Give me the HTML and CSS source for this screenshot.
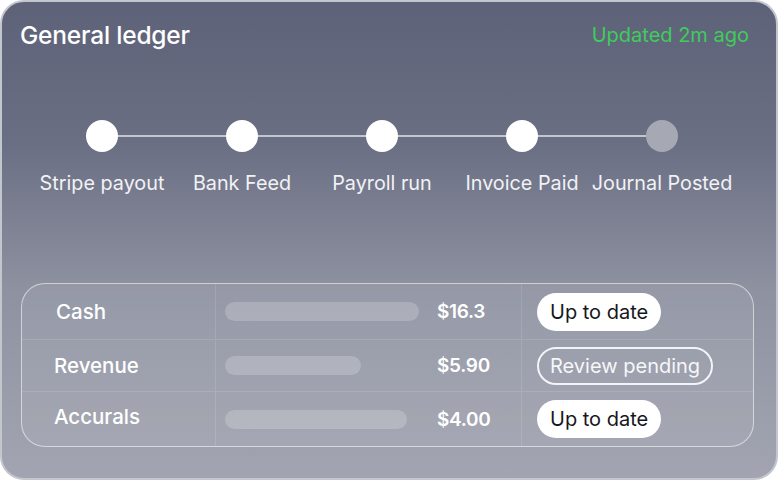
FILE: index.html
```html
<!DOCTYPE html>
<html lang="en">
<head>
<meta charset="utf-8">
<title>General ledger</title>
<link rel="stylesheet" href="styles.css">
</head>
<body>
<div class="card">
  <header class="head">
    <h1 class="title">General ledger</h1>
    <span class="updated">Updated 2m ago</span>
  </header>

  <ol class="steps">
    <li class="step done"><span class="dot"></span><span class="label">Stripe payout</span></li>
    <li class="step done"><span class="dot"></span><span class="label">Bank Feed</span></li>
    <li class="step done"><span class="dot"></span><span class="label">Payroll run</span></li>
    <li class="step done"><span class="dot"></span><span class="label">Invoice Paid</span></li>
    <li class="step pending"><span class="dot"></span><span class="label">Journal Posted</span></li>
  </ol>

  <div class="ledger">
    <div class="cell name row1">Cash</div>
    <div class="cell value row1"><div class="track"><div class="bar" style="width:194px"></div></div><span class="amount">$16.3</span></div>
    <div class="cell status row1"><span class="badge solid">Up to date</span></div>

    <div class="cell name row2">Revenue</div>
    <div class="cell value row2"><div class="track"><div class="bar" style="width:136px"></div></div><span class="amount">$5.90</span></div>
    <div class="cell status row2"><span class="badge outline">Review pending</span></div>

    <div class="cell name row3 last">Accurals</div>
    <div class="cell value row3 last"><div class="track"><div class="bar" style="width:182px"></div></div><span class="amount">$4.00</span></div>
    <div class="cell status row3 last"><span class="badge solid">Up to date</span></div>
  </div>
</div>
</body>
</html>
```

FILE: styles.css
```css
* { box-sizing: border-box; }

html, body {
  margin: 0;
  padding: 0;
  background: #ffffff;
}

body {
  font-family: Inter, "Liberation Sans", sans-serif;
  width: 778px;
  height: 480px;
}

.card {
  width: 778px;
  height: 480px;
  border: 2px solid #c4c6cd;
  border-radius: 24px;
  background: linear-gradient(180deg, #5d6278 0%, #6b6f84 30%, #8e91a0 60%, #a2a5b1 100%);
  padding: 17px 27px 0 18px;
  display: flex;
  flex-direction: column;
}

.head {
  display: flex;
  justify-content: space-between;
  align-items: center;
  height: 32px;
}

.title {
  margin: 0;
  font-size: 24.5px;
  font-weight: 500;
  color: #ffffff;
  letter-spacing: -0.2px;
}

.updated {
  font-size: 20px;
  color: #3fcc5c;
}

.steps {
  list-style: none;
  margin: 69px 0 0 12px;
  padding: 0;
  display: grid;
  grid-template-columns: repeat(5, 140px);
}

.step {
  position: relative;
  display: flex;
  flex-direction: column;
  align-items: center;
}

.step::before {
  content: "";
  position: absolute;
  top: 15px;
  left: 50%;
  width: 100%;
  height: 2px;
  background: #c3c5cf;
}

.step:last-child::before { display: none; }

.dot {
  position: relative;
  width: 32px;
  height: 32px;
  border-radius: 50%;
  background: #ffffff;
}

.pending .dot { background: #a6a9b4; }

.label {
  margin-top: 19px;
  font-size: 19.8px;
  line-height: 24px;
  color: #f1f2f5;
  white-space: nowrap;
}

.ledger {
  margin: 88px 0 0 1px;
  width: 733px;
  border: 1.5px solid rgba(255, 255, 255, 0.55);
  border-radius: 24px;
  background: rgba(255, 255, 255, 0.07);
  display: grid;
  grid-template-columns: 194px 306px 1fr;
  grid-template-rows: 56px 52px 54px;
}

.cell {
  display: flex;
  align-items: center;
  border-bottom: 1px solid rgba(255, 255, 255, 0.12);
}

.cell.last { border-bottom: none; }

.name, .value { border-right: 1px solid rgba(255, 255, 255, 0.12); }

.name {
  padding-left: 32px;
  font-size: 20.5px;
  font-weight: 500;
  color: #ffffff;
}

.row1.name { padding-left: 34px; }

.row3.name { padding-bottom: 5px; }

.value {
  padding-left: 9px;
  gap: 18px;
}

.track {
  width: 194px;
  height: 19px;
}

.bar {
  height: 19px;
  border-radius: 10px;
  background: rgba(255, 255, 255, 0.2);
}

.amount {
  font-size: 19px;
  font-weight: 600;
  color: #ffffff;
  letter-spacing: -0.3px;
}

.status {
  padding-left: 15px;
}

.badge {
  display: inline-flex;
  align-items: center;
  height: 38px;
  padding: 0 13px;
  border-radius: 19px;
  font-size: 20px;
  white-space: nowrap;
}

.badge.solid {
  background: #ffffff;
  color: #16171c;
}

.badge.outline {
  border: 2px solid #f3f4f7;
  color: #f6f7f9;
  padding: 0 11px;
}
```
